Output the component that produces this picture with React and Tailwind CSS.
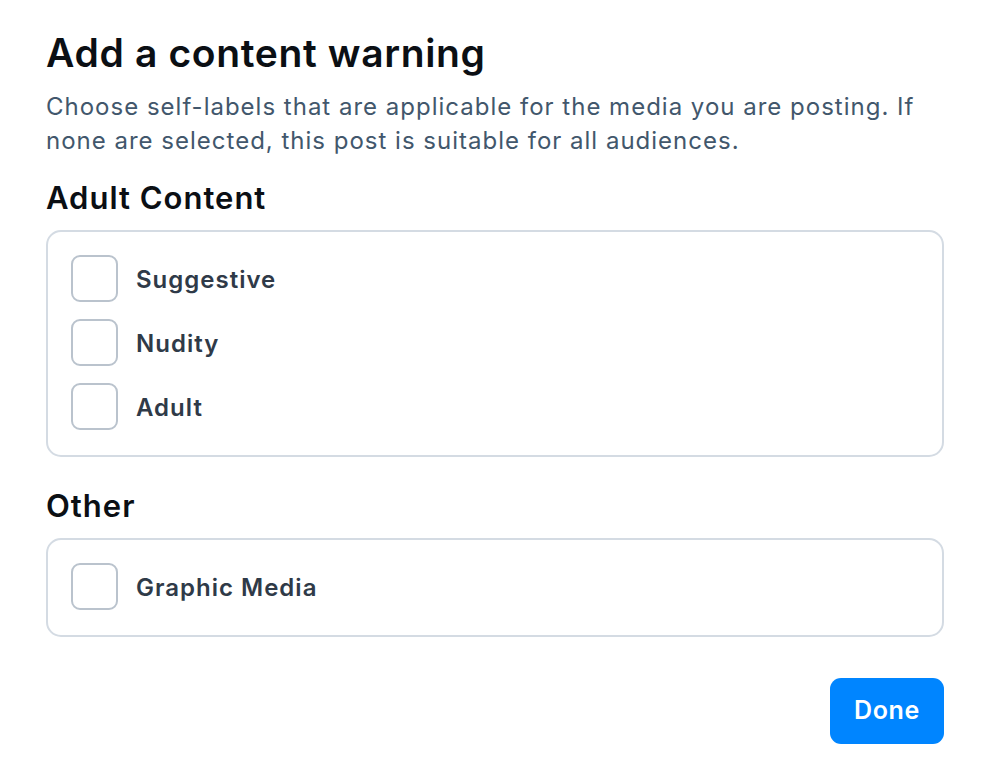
function Checkbox(props) {
    return (
        <label className="flex items-center gap-[18px] h-[47px]">
            <span className="w-[47px] h-[47px] shrink-0 rounded-[9px] border-2 border-[#bac3cd] bg-white" />
            <span className="mt-[3px] text-[24px] leading-[30px] font-semibold tracking-[1px] text-[#2f3a48]">{props.label}</span>
        </label>
    )
}

function Group(props) {
    return (
        <div className="border-2 border-[#d4dbe3] rounded-[15px] px-[23px] pt-[23px] pb-[25px] flex flex-col gap-[17px]">
            {props.items.map(item => <Checkbox key={item} label={item} />)}
        </div>
    )
}

export default function App() {
    return (
        <div className="w-[981px] h-[783px] bg-white pl-[46px] pr-[37px] pt-[30px] font-['Inter',sans-serif]">
            <h1 className="text-[39px] leading-[46px] font-semibold text-[#0b0f14] tracking-[0.65px]">
                Add a content warning
            </h1>
            <p className="mt-[14px] text-[24px] leading-[34px] tracking-[1px] text-[#42576c]">
                Choose self-labels that are applicable for the media you are posting. If none are selected, this post is suitable for all audiences.
            </p>
            <h2 className="mt-[22px] text-[31px] leading-[36px] font-semibold tracking-[1px] text-[#0b0f14]">
                Adult Content
            </h2>
            <div className="mt-[14px]">
                <Group items={["Suggestive", "Nudity", "Adult"]} />
            </div>
            <h2 className="mt-[31px] text-[31px] leading-[36px] font-semibold tracking-[1px] text-[#0b0f14]">
                Other
            </h2>
            <div className="mt-[14px]">
                <Group items={["Graphic Media"]} />
            </div>
            <div className="flex justify-end mt-[41px]">
                <button className="w-[114px] h-[66px] rounded-[11px] bg-[#0085ff] text-white text-[25px] tracking-[0.6px] font-semibold">
                    Done
                </button>
            </div>
        </div>
    )
}
